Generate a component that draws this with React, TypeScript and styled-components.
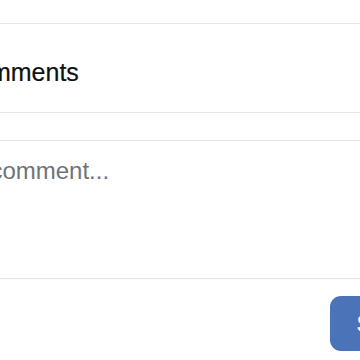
import React from "react";
import styled, { createGlobalStyle } from "styled-components";
import { MessageSquare } from "lucide-react";

const GlobalStyle = createGlobalStyle`
  html, body {
    margin: 0;
    padding: 0;
    background: #ffffff;
    overflow: hidden;
  }
  body {
    font-family: "Liberation Sans", Arial, Helvetica, sans-serif;
  }
`;

const Page = styled.div`
  width: 360px;
  height: 360px;
  overflow: hidden;
  background: #ffffff;
`;

const Panel = styled.section`
  width: 571px;
  margin-left: -96px;
  display: flex;
  flex-direction: column;
`;

const TopBar = styled.div`
  height: 23px;
  border-bottom: 1px solid #e6e6e6;
`;

const Header = styled.header`
  height: 89px;
  box-sizing: border-box;
  padding: 34px 16px 27px;
  display: flex;
  align-items: center;
  gap: 14px;
  border-bottom: 1px solid #e6e6e6;
  color: #1c1c1e;
`;

const Title = styled.h2`
  margin: 0;
  font-size: 25px;
  line-height: 28px;
  font-weight: 400;
  color: #111111;
  -webkit-text-stroke: 0.2px #111111;
`;

const Toolbar = styled.div`
  height: 27px;
  border-bottom: 1px solid #e4e4e4;
`;

const Editor = styled.textarea`
  display: block;
  height: 138px;
  box-sizing: border-box;
  margin: 0;
  padding: 16px 16px 16px 17px;
  border: none;
  border-bottom: 1px solid #e6e6e6;
  resize: none;
  outline: none;
  font-family: "Liberation Sans", Arial, Helvetica, sans-serif;
  font-size: 24px;
  line-height: 28px;
  color: #1c1c1e;
  background: #ffffff;

  &::placeholder {
    color: #6e737c;
    opacity: 1;
  }
`;

const Footer = styled.footer`
  display: flex;
  justify-content: flex-end;
  padding: 17px 10px 16px 16px;
  box-shadow: inset 0 2px 3px -2px rgba(0, 0, 0, 0.06);
`;

const SubmitButton = styled.button`
  height: 55px;
  padding: 0 27px;
  border: none;
  border-radius: 11px;
  background: #4b74b8;
  color: #ffffff;
  font-family: "Liberation Sans", Arial, Helvetica, sans-serif;
  font-size: 24px;
  line-height: 28px;
  font-weight: 600;
  cursor: pointer;
`;

export default function App() {
  return (
    <>
      <GlobalStyle />
      <Page>
        <Panel>
          <TopBar />
          <Header>
            <MessageSquare size={24} strokeWidth={2} />
            <Title>Comments</Title>
          </Header>
          <Toolbar />
          <Editor placeholder="Add a comment..." />
          <Footer>
            <SubmitButton type="button">Submit</SubmitButton>
          </Footer>
        </Panel>
      </Page>
    </>
  );
}
